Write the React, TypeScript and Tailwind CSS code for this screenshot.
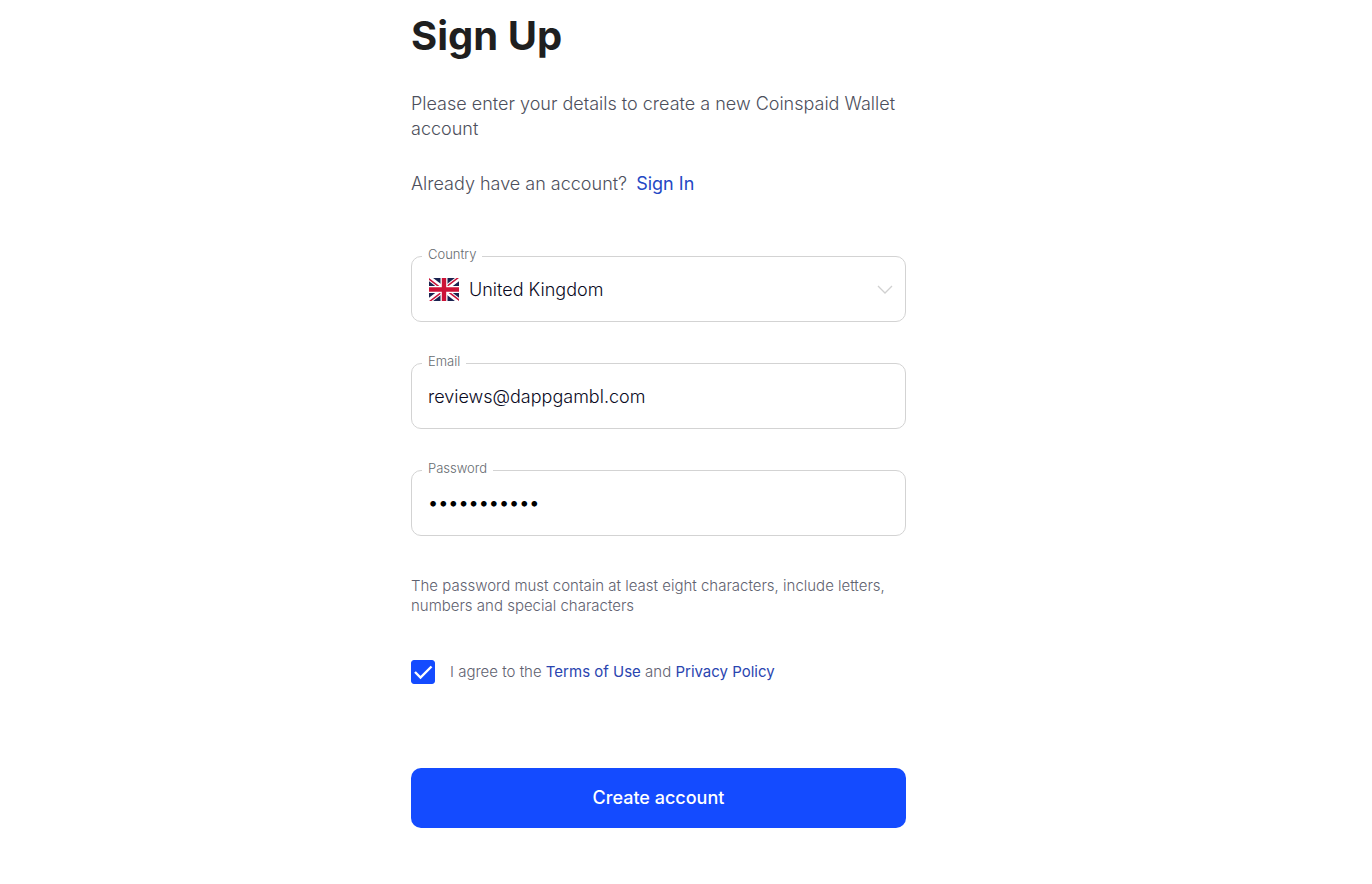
import * as React from 'react'

function FlagGB() {
  return (
    <svg viewBox="0 0 30 23" className="h-[23px] w-[30px] shrink-0" aria-hidden="true">
      <clipPath id="gb-corners">
        <path d="M15 11.5h15V23zM15 11.5V23H0zM15 11.5H0V0zM15 11.5V0h15z" />
      </clipPath>
      <path fill="#1b2350" d="M0 0h30v23H0z" />
      <path stroke="#fff" strokeWidth="5" d="M0 0l30 23M30 0L0 23" />
      <path stroke="#c8143a" strokeWidth="3" d="M0 0l30 23M30 0L0 23" clipPath="url(#gb-corners)" />
      <path stroke="#fff" strokeWidth="7" d="M15 0v23M0 11.5h30" />
      <path stroke="#cc1236" strokeWidth="4.4" d="M15 0v23M0 11.5h30" />
    </svg>
  )
}

function Field({ id, label, children }: { id: string; label: string; children: React.ReactNode }) {
  return (
    <fieldset className="min-w-0 rounded-[10px] border border-[#d3d3d3] px-2.5">
      <legend className="px-1.5 pb-1 text-[13px] leading-4 font-light text-[#666b70]">
        <label htmlFor={id}>{label}</label>
      </legend>
      {children}
    </fieldset>
  )
}

export default function App() {
  const [email, setEmail] = React.useState('reviews@dappgambl.com')
  const [password, setPassword] = React.useState('reviews#123')
  const [agreed, setAgreed] = React.useState(true)

  return (
    <main className="min-h-screen bg-white pr-[55px] font-['Inter',sans-serif]">
      <form className="mx-auto flex max-w-[495px] flex-col pt-3 pb-14" onSubmit={(e) => e.preventDefault()}>
        <h1 className="text-[40px] leading-12 font-bold text-[#1f1f1f]">Sign Up</h1>
        <p className="mt-[31px] text-lg leading-[25px] font-light text-[#4d4f5c]">
          Please enter your details to create a new Coinspaid Wallet account
        </p>
        <p className="mt-[30px] text-lg leading-[25px] font-light text-[#4d4f5c]">
          Already have an account?{' '}
          <a href="#sign-in" className="ml-1 font-normal text-[#2447c4]">
            Sign In
          </a>
        </p>

        <div className="mt-[50px] flex flex-col gap-[31px]">
          <Field id="country" label="Country">
            <div className="relative flex h-[55px] items-center pb-2">
              <div className="pointer-events-none absolute left-[7px]">
                <FlagGB />
              </div>
              <select
                id="country"
                defaultValue="gb"
                className="h-full w-full appearance-none bg-transparent pr-8 pl-[47px] text-lg font-light text-[#0a0a1e] outline-none"
              >
                <option value="gb">United Kingdom</option>
                <option value="de">Germany</option>
                <option value="ee">Estonia</option>
              </select>
              <svg viewBox="0 0 16 10" className="pointer-events-none absolute right-0.5 h-2.5 w-4" aria-hidden="true">
                <path d="M1 1l7 7 7-7" fill="none" stroke="#d0d0d0" strokeWidth="1.3" />
              </svg>
            </div>
          </Field>
          <Field id="email" label="Email">
            <input
              id="email"
              type="email"
              value={email}
              onChange={(e) => setEmail(e.target.value)}
              className="block h-[55px] w-full bg-transparent px-1.5 pb-2 text-lg font-light text-[#0a0a1e] outline-none"
            />
          </Field>
          <Field id="password" label="Password">
            <input
              id="password"
              type="password"
              value={password}
              onChange={(e) => setPassword(e.target.value)}
              className="block h-[55px] w-full bg-transparent px-1.5 pb-2.5 text-lg text-black outline-none"
            />
          </Field>
        </div>

        <p className="mt-10 text-[15px] leading-5 font-light text-[#5f6270]">
          The password must contain at least eight characters, include letters, numbers and special characters
        </p>

        <div className="mt-11 flex items-center gap-[15px]">
          <div className="relative h-6 w-6">
            <input
              id="agree"
              type="checkbox"
              checked={agreed}
              onChange={(e) => setAgreed(e.target.checked)}
              className="block h-6 w-6 appearance-none rounded-[3px] border border-[#144bff] bg-white checked:bg-[#144bff]"
            />
            {agreed && (
              <svg viewBox="0 0 24 24" className="pointer-events-none absolute inset-0 h-6 w-6" aria-hidden="true">
                <path d="M4 12l5.5 5.5L20.5 6.5" fill="none" stroke="#fff" strokeWidth="2.4" />
              </svg>
            )}
          </div>
          <label htmlFor="agree" className="text-[15px] leading-5 font-light text-[#5f6270]">
            I agree to the{' '}
            <a href="#terms" className="font-normal text-[#2a45b0]">
              Terms of Use
            </a>{' '}
            and{' '}
            <a href="#privacy" className="font-normal text-[#2a45b0]">
              Privacy Policy
            </a>
          </label>
        </div>

        <button type="submit" className="mt-[84px] h-15 rounded-[10px] bg-[#144bff] text-lg font-medium text-white">
          Create account
        </button>
      </form>
    </main>
  )
}
